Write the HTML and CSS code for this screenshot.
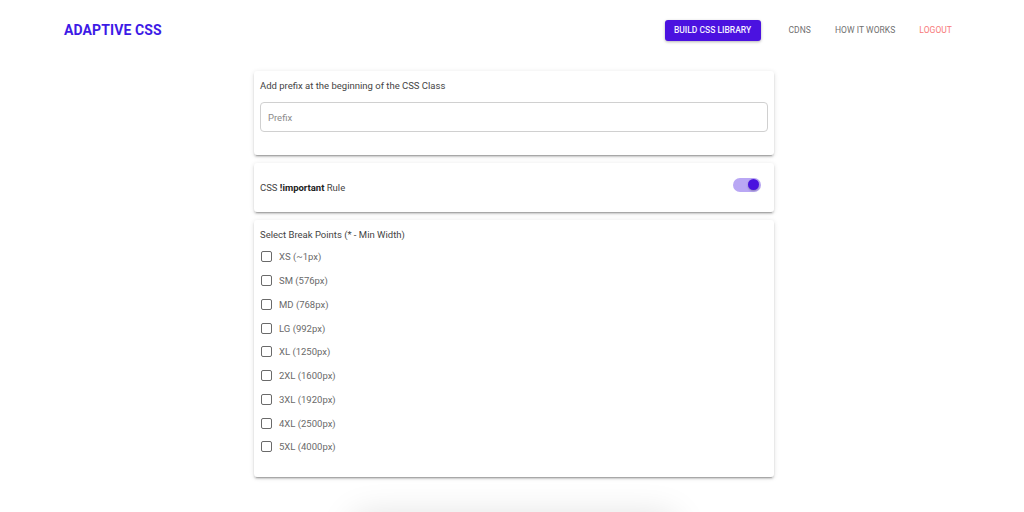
FILE: index.html
```html
<!DOCTYPE html>
<html lang="en">
<head>
  <meta charset="UTF-8">
  <title>Adaptive CSS</title>
  <link rel="stylesheet" href="styles.css">
</head>
<body>
  <header class="header">
    <div class="logo">ADAPTIVE CSS</div>
    <nav class="nav">
      <button class="build-btn">BUILD CSS LIBRARY</button>
      <a class="nav-link">CDNS</a>
      <a class="nav-link">HOW IT WORKS</a>
      <a class="nav-link logout">LOGOUT</a>
    </nav>
  </header>

  <main class="content">
    <div class="card prefix-card">
      <div class="card-title">Add prefix at the beginning of the CSS Class</div>
      <input type="text" class="prefix-input" placeholder="Prefix">
    </div>

    <div class="card important-card">
      <div class="card-title">CSS <b>!important</b> Rule</div>
      <div class="toggle"><span class="thumb"></span></div>
    </div>

    <div class="card points-card">
      <div class="card-title">Select Break Points (* - Min Width)</div>
      <label class="point"><span class="box"></span>XS (~1px)</label>
      <label class="point"><span class="box"></span>SM (576px)</label>
      <label class="point"><span class="box"></span>MD (768px)</label>
      <label class="point"><span class="box"></span>LG (992px)</label>
      <label class="point"><span class="box"></span>XL (1250px)</label>
      <label class="point"><span class="box"></span>2XL (1600px)</label>
      <label class="point"><span class="box"></span>3XL (1920px)</label>
      <label class="point"><span class="box"></span>4XL (2500px)</label>
      <label class="point"><span class="box"></span>5XL (4000px)</label>
    </div>

    <div class="floating"></div>
  </main>
</body>
</html>
```

FILE: styles.css
```css
body {
  margin: 0;
  font-family: Roboto, "Liberation Sans", Arial, sans-serif;
  background: #fff;
  color: #444;
  overflow: hidden;
}

.header {
  height: 60px;
  padding: 0 72px 0 64px;
  display: flex;
  align-items: center;
  justify-content: space-between;
}

.logo {
  font-size: 14px;
  font-weight: 700;
  color: #3d1ae6;
  letter-spacing: 0.1px;
}

.nav {
  display: flex;
  align-items: center;
  gap: 24px;
}

.build-btn {
  width: 96px;
  height: 21px;
  margin-right: 4px;
  border: none;
  border-radius: 3px;
  background: #4b12e0;
  color: #f4f0ff;
  font-family: inherit;
  font-size: 8.5px;
  font-weight: 500;
  box-shadow: 0 1px 3px rgba(0, 0, 0, 0.3);
  padding: 0;
}

.nav-link {
  font-size: 8.5px;
  color: #707070;
  letter-spacing: 0.05px;
}

.logout {
  color: #f77a7a;
}

.content {
  width: 520px;
  margin: 11px auto 0;
  padding-left: 4px;
}

.card {
  background: #fff;
  border-radius: 3px;
  box-shadow: 0 3px 1px -2px rgba(0, 0, 0, 0.2), 0 2px 2px 0 rgba(0, 0, 0, 0.14), 0 1px 5px 0 rgba(0, 0, 0, 0.12);
  margin-bottom: 8px;
}

.card-title {
  font-size: 9.5px;
  line-height: 14px;
  color: #444;
}

.card-title b {
  font-weight: 700;
  color: #222;
}

.prefix-card {
  height: 84px;
  box-sizing: border-box;
  padding: 8px 6px 0;
}

.prefix-input {
  display: block;
  box-sizing: border-box;
  width: 100%;
  height: 30px;
  margin-top: 9px;
  padding: 0 7px;
  border: 1px solid #d0d0d0;
  border-radius: 4px;
  font-family: inherit;
  font-size: 9.5px;
  outline: none;
}

.prefix-input::placeholder {
  color: #8a8a8a;
}

.important-card {
  height: 49px;
  padding: 0 13px 0 6px;
  display: flex;
  align-items: center;
  justify-content: space-between;
}

.toggle {
  width: 28px;
  height: 14px;
  margin-top: -6px;
  border-radius: 7px;
  background: #b9a7f4;
  display: flex;
  align-items: center;
  justify-content: flex-end;
  padding: 0 2px;
  box-sizing: border-box;
}

.thumb {
  width: 11px;
  height: 11px;
  border-radius: 50%;
  background: #4a12df;
  box-shadow: 0 1px 2px rgba(0, 0, 0, 0.25);
}

.points-card {
  height: 257px;
  box-sizing: border-box;
  padding: 8px 6px 0;
}

.points-card .card-title {
  margin-bottom: 3px;
}

.point {
  height: 23.75px;
  display: flex;
  align-items: center;
  gap: 7px;
  font-size: 9.5px;
  color: #6a6a6a;
  padding-left: 1px;
}

.box {
  width: 9px;
  height: 9px;
  border: 1.5px solid #6a6a6a;
  border-radius: 2px;
}

.floating {
  width: 320px;
  height: 120px;
  margin: 44px auto 0;
  background: #fff;
  border-radius: 6px;
  box-shadow: 0 -4px 36px rgba(0, 0, 0, 0.14);
}
```
